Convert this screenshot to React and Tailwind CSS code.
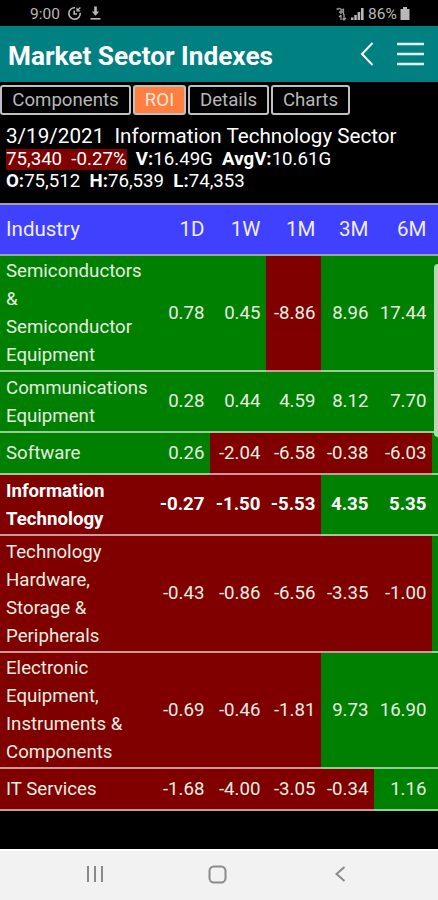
// Columns after the industry name, in display order.
const PERIODS = ['1D', '1W', '1M', '3M', '6M'];

const COLS = 'grid grid-cols-[154px_56px_56px_55px_53px_58px_6px]';

// `next` is the 1Y change, only its left edge fits on the screen.
const ROWS = [
    { name: ['Semiconductors', '&', 'Semiconductor', 'Equipment'], roi: ['0.78', '0.45', '-8.86', '8.96', '17.44'], next: 1, height: 'h-[116px]' },
    { name: ['Communications', 'Equipment'], roi: ['0.28', '0.44', '4.59', '8.12', '7.70'], next: 1, height: 'h-[61px]' },
    { name: ['Software'], roi: ['0.26', '-2.04', '-6.58', '-0.38', '-6.03'], next: 1, height: 'h-[42px]' },
    { name: ['Information', 'Technology'], roi: ['-0.27', '-1.50', '-5.53', '4.35', '5.35'], next: 1, height: 'h-[61px]', bold: true },
    { name: ['Technology', 'Hardware,', 'Storage &', 'Peripherals'], roi: ['-0.43', '-0.86', '-6.56', '-3.35', '-1.00'], next: 1, height: 'h-[117px]' },
    { name: ['Electronic', 'Equipment,', 'Instruments &', 'Components'], roi: ['-0.69', '-0.46', '-1.81', '9.73', '16.90'], next: 1, height: 'h-[116px]' },
    { name: ['IT Services'], roi: ['-1.68', '-4.00', '-3.05', '-0.34', '1.16'], next: 1, height: 'h-[42px]' },
];

const cellBg = (value) => (Number(value) < 0 ? 'bg-[#800000]' : 'bg-[#008000]');

const StatusBar = () => (
    <div className="flex h-[26px] shrink-0 items-center justify-between pl-[30px] pr-[28px] pt-[1px] text-[#b8b8b8]">
        <div className="flex items-center">
            <span className="w-[30px] whitespace-nowrap pt-[2px] text-[15.5px] leading-none">9:00</span>
            <svg className="ml-[7px]" width="15" height="15" viewBox="0 0 15 15" fill="none" stroke="currentColor" strokeWidth="1.6">
                <path d="M8 1.800A5.700 5.700 0 1 0 13.200 6.800" />
                <path d="M7.200 4.500V8H10" />
                <path d="M9.800 5L13.300 1.500M10 1.800V4.900H13.200" strokeWidth="1.200" />
            </svg>
            <svg className="ml-[8px]" width="11" height="15" viewBox="0 0 11 15" fill="currentColor">
                <path d="M4.200 0.500H6.800V5.500H9.200L5.500 9.800L1.800 5.500H4.200Z" />
                <path d="M0.500 12H10.500V13.600H0.500Z" />
            </svg>
        </div>
        <div className="flex items-center">
            <svg width="11" height="14" viewBox="0 0 11 14" fill="none" stroke="#999999" strokeWidth="1.300">
                <path d="M0.500 2H3M2.500 1L7 3M3 5H7M5 2V7M7.500 1.500V8" />
                <path d="M5 13V8M5 8L3 10M8 7V13M8 13L9.800 11M8 13L6.500 11.500" />
            </svg>
            <svg className="ml-[4px]" width="13" height="13" viewBox="0 0 13 13" fill="currentColor">
                <path d="M0 10.500H2.500V13H0ZM3.300 8H5.800V13H3.300ZM6.600 5H9.200V13H6.600ZM10 1H12.600V13H10Z" />
            </svg>
            <span className="ml-[4px] w-[30px] whitespace-nowrap pt-[2px] text-[15.5px] leading-none">86%</span>
            <svg className="ml-[2px]" width="10" height="13" viewBox="0 0 10 13" fill="currentColor">
                <path d="M3 0H7V2H9.500V13H0.500V2H3Z" />
            </svg>
        </div>
    </div>
);

const TitleBar = () => (
    <header className="flex h-[56px] shrink-0 items-center bg-[#008080] pl-[8px] pr-[14px] text-white">
        <h1 className="flex-1 whitespace-nowrap pt-[3px] text-[26.2px] font-bold leading-[36px]">Market Sector Indexes</h1>
        <svg width="14" height="26" viewBox="0 0 14 26" fill="none" stroke="currentColor" strokeWidth="2">
            <path d="M12.500 2L2 13L12.500 24" />
        </svg>
        <svg className="ml-[23px]" width="27" height="26" viewBox="0 0 27 26" stroke="#e4f2f2" strokeWidth="2.600">
            <path d="M0 3H27M0 13H27M0 23H27" />
        </svg>
    </header>
);

const Tab = ({ label, width, active }) => (
    <button
        className={[
            'h-[30px] rounded-[3px] border-2 border-[#c0c0c0] text-[18.67px] leading-[26px] whitespace-nowrap',
            width,
            active ? 'bg-[#ff7f40] text-[#f6e6dc]' : 'bg-black text-[#b8b8b8]',
        ].join(' ')}
    >
        {label}
    </button>
);

const Summary = () => (
    <section className="h-[87px] shrink-0 whitespace-pre pl-[6px] pt-[8px] text-white">
        <div className="text-[20.65px] leading-[24px]">{'3/19/2021  Information Technology Sector'}</div>
        <div className="text-[18.67px] leading-[22px]">
            <span className="inline-block bg-[#800000] leading-[21px]">75,340  -0.27%</span>
            {'  '}
            <b>V:</b>16.49G{'  '}
            <b>AvgV:</b>10.61G
        </div>
        <div className="text-[18.67px] leading-[22px]">
            <b>O:</b>75,512{'  '}
            <b>H:</b>76,539{'  '}
            <b>L:</b>74,353
        </div>
    </section>
);

const IndustryRow = ({ row }) => (
    <div className={`${COLS} ${row.height} ${row.bold ? 'font-bold text-white' : 'text-[#e6eee0]'} shrink-0 text-[18.67px]`}>
        <div className={`flex flex-col justify-center border-b-2 border-white/60 pl-[6px] leading-[28px] ${cellBg(row.roi[0])}`}>
            {row.name.map((line) => (
                <span key={line} className="block whitespace-nowrap">{line}</span>
            ))}
        </div>
        {row.roi.map((value, i) => (
            <div key={PERIODS[i]} className={`flex items-center justify-end border-b-2 border-white/60 pb-[1px] pr-[5.5px] ${cellBg(value)}`}>
                {value}
            </div>
        ))}
        <div className={`border-b-2 border-white/60 ${cellBg(row.next)}`} />
    </div>
);

const NavBar = () => (
    <nav className="flex h-[51px] shrink-0 items-center border-t-2 border-white bg-[#f2f2f2] pb-[3px] pl-[86px] text-[#8a8a8a]">
        <svg width="18" height="18" viewBox="0 0 18 18" stroke="currentColor" strokeWidth="2">
            <path d="M2 1V17M9 1V17M16 1V17" />
        </svg>
        <svg className="ml-[104px]" width="19" height="19" viewBox="0 0 19 19" fill="none" stroke="currentColor" strokeWidth="2">
            <rect x="1.500" y="1.500" width="16" height="16" rx="4.500" />
        </svg>
        <svg className="ml-[107px]" width="12" height="18" viewBox="0 0 12 18" fill="none" stroke="currentColor" strokeWidth="2">
            <path d="M10.500 2L2.500 9L10.500 16" />
        </svg>
    </nav>
);

export default function App() {
    return (
        <div className="relative flex h-[900px] w-[438px] flex-col overflow-hidden bg-black font-[Roboto,sans-serif]">
            <StatusBar />
            <TitleBar />
            <div className="flex h-[34px] shrink-0 items-center gap-[2px] pt-[1px]">
                <Tab label="Components" width="w-[131px]" />
                <Tab label="ROI" width="w-[53px]" active />
                <Tab label="Details" width="w-[81px]" />
                <Tab label="Charts" width="w-[79px]" />
            </div>
            <Summary />
            <div className={`${COLS} h-[53px] shrink-0 border-y-2 border-[#a0a0a8] bg-[#4040ff] text-[20.5px] text-[#eeeeff]`}>
                <div className="flex items-center pl-[6px]">Industry</div>
                {PERIODS.map((period) => (
                    <div key={period} className="flex items-center justify-end pr-[5.5px]">{period}</div>
                ))}
            </div>
            {ROWS.map((row) => (
                <IndustryRow key={row.name.join(' ')} row={row} />
            ))}
            <div className="flex-1" />
            <NavBar />

            {/* Scroll thumb over the table */}
            <div className="absolute left-[434px] top-[264px] h-[173px] w-[8px] rounded-[4px] bg-[#b4d8b4]" />
        </div>
    );
}
